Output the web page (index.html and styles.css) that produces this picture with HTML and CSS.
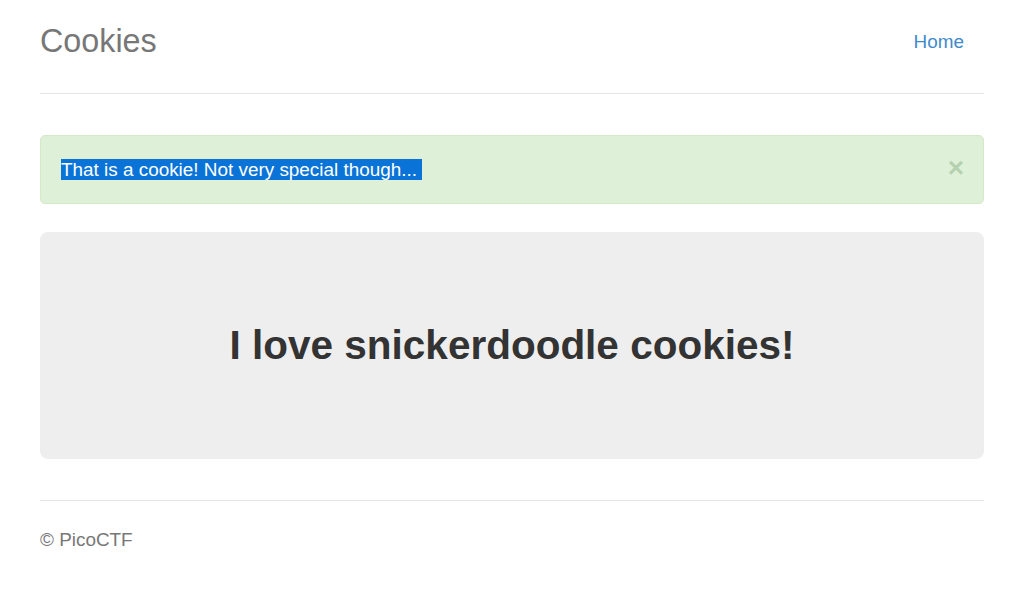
FILE: index.html
```html
<!DOCTYPE html>
<html lang="en">
<head>
<meta charset="utf-8">
<title>Cookies</title>
<link rel="stylesheet" href="styles.css">
</head>
<body>
<div class="container">
  <header class="header">
    <h3 class="brand">Cookies</h3>
    <nav class="nav">
      <a class="nav-link" href="#">Home</a>
    </nav>
  </header>

  <div class="alert">
    <span class="alert-text"><span class="selected">That is a cookie! Not very special though...&nbsp;</span></span>
    <button class="close" type="button" aria-label="Close">×</button>
  </div>

  <div class="jumbotron">
    <h1 class="headline">I love snickerdoodle cookies!</h1>
  </div>

  <footer class="footer">
    <p class="footer-text">© PicoCTF</p>
  </footer>
</div>
</body>
</html>
```

FILE: styles.css
```css
* {
  box-sizing: border-box;
}

html, body {
  margin: 0;
  padding: 0;
  background: #fff;
}

body {
  font-family: "Liberation Sans", Arial, Helvetica, sans-serif;
  font-size: 18.9px;
  line-height: 27px;
  color: #333;
}

.container {
  padding: 0 40px;
}

.header {
  display: flex;
  justify-content: space-between;
  align-items: flex-start;
  padding-top: 15px;
  padding-bottom: 25px;
  border-bottom: 1px solid #e5e5e5;
}

.brand {
  margin: 0;
  font-size: 32.3px;
  line-height: 53px;
  font-weight: 500;
  color: #777;
}

.nav {
  display: flex;
}

.nav-link {
  display: block;
  padding: 13px 20px 13px 20px;
  line-height: 27px;
  color: #428bca;
  text-decoration: none;
}

.alert {
  display: flex;
  justify-content: space-between;
  align-items: flex-start;
  margin-top: 41px;
  margin-bottom: 28px;
  padding: 20px 20px 20px 20px;
  background: #dff0d8;
  border: 1px solid #d6e9c6;
  border-radius: 5px;
  color: #3c763d;
}

.alert-text {
  display: block;
  line-height: 27px;
}

.selected {
  background: #0a73d8;
  color: #fff;
}

.close {
  margin: -2px -1px 0 0;
  padding: 0;
  border: 0;
  background: transparent;
  font-family: "Liberation Sans", Arial, sans-serif;
  font-size: 28px;
  font-weight: bold;
  line-height: 1;
  color: #3c763d;
  opacity: 0.25;
  cursor: pointer;
}

.jumbotron {
  padding: 91px 20px 92px;
  margin-bottom: 41px;
  background: #eee;
  border-radius: 8px;
  text-align: center;
}

.headline {
  margin: 0;
  font-size: 40.5px;
  line-height: 44px;
  font-weight: bold;
  color: #333;
}

.footer {
  padding-top: 25px;
  border-top: 1px solid #e5e5e5;
  color: #777;
}

.footer-text {
  margin: 0;
  line-height: 27px;
}
```
